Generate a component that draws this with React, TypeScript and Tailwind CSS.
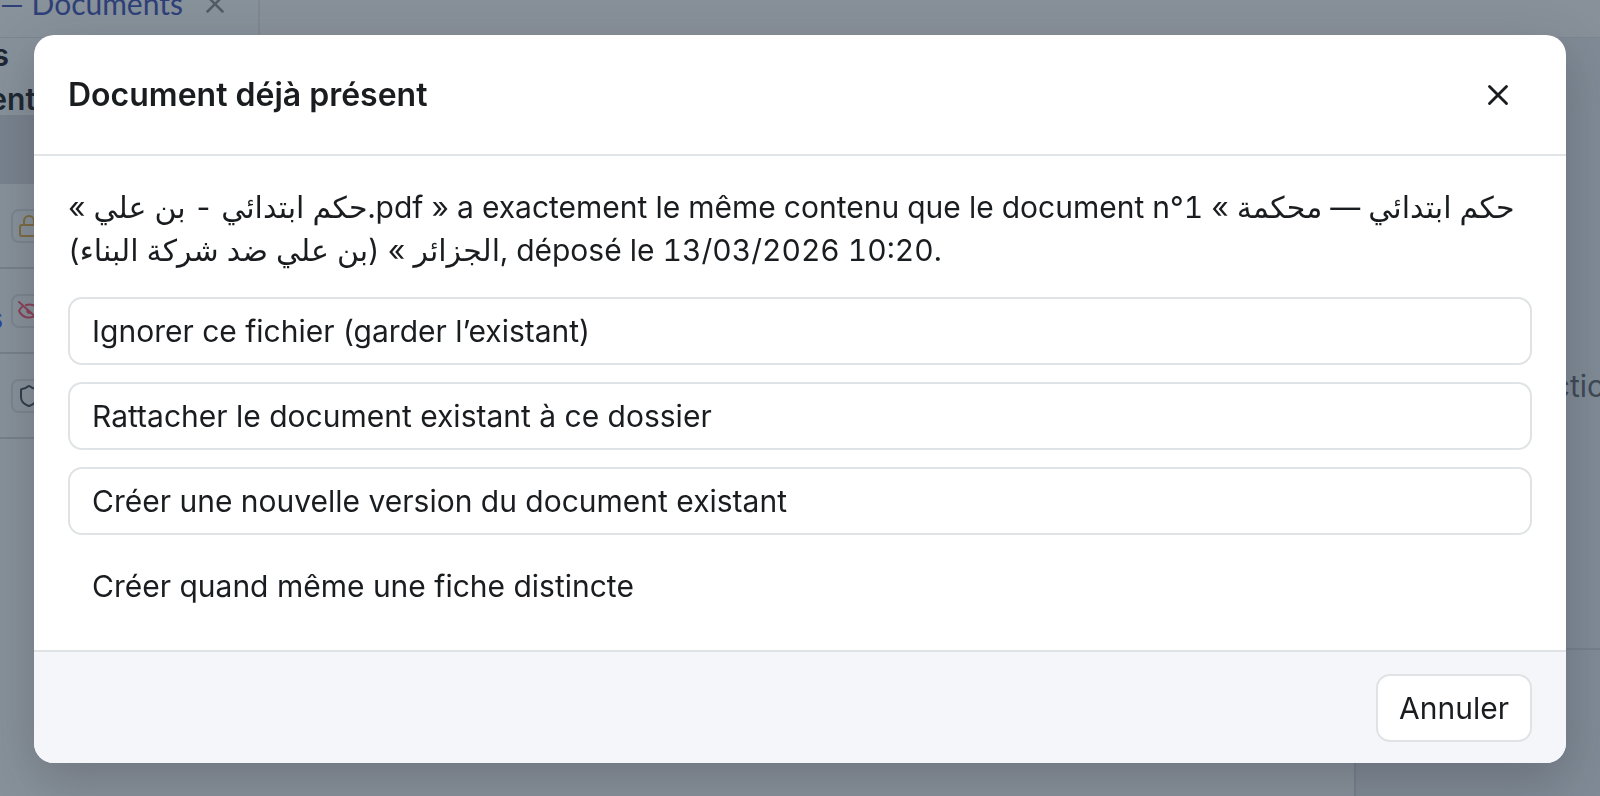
import React from 'react';
import { Lock, Shield, X } from 'lucide-react';

const choices = [
  { label: 'Ignorer ce fichier (garder l’existant)', outlined: true },
  { label: 'Rattacher le document existant à ce dossier', outlined: true },
  { label: 'Créer une nouvelle version du document existant', outlined: true },
  { label: 'Créer quand même une fiche distincte', outlined: false },
];

const EyeSlash: React.FC<{ className?: string }> = ({ className }) => (
  <svg
    viewBox="0 0 24 24"
    fill="none"
    stroke="currentColor"
    strokeWidth={2}
    strokeLinecap="round"
    strokeLinejoin="round"
    className={className}
  >
    <path d="M2 3l20 18" />
    <path d="M9 6c7-2 11 2 13 6-1 2-2 3-3.500 4.500" />
    <path d="M5 8c-1.500 1-2.300 2.500-3 4 3 6 9 8 15 5.500" />
    <path d="M10.500 11a2 2 0 0 0 3 2.500" />
  </svg>
);

const rows = [
  { icon: Lock, color: 'text-[#7d6b42]', label: 'Confidentiel' },
  { icon: EyeSlash, color: 'text-[#8b4057]', label: 'Masqué', link: 's' },
  { icon: Shield, color: 'text-[#2f3d4a]', label: 'Protégé' },
];

// Page behind the dialog, already dimmed
const Backdrop: React.FC = () => (
  <div className="flex h-screen flex-col overflow-hidden bg-[#7f8b96]" aria-hidden="true">
    <div className="flex h-[38px] shrink-0 border-b border-[#7c8791] bg-[#88919a]">
      <div className="flex w-[260px] items-end gap-[17px] border-r-2 border-[#7f8992] bg-[#87929b] pb-[18px] font-[Lato,sans-serif] text-[30px] leading-[32px] text-[#2f4079]">
        <span className="flex w-[183px] shrink-0 justify-end whitespace-nowrap">
          <span className="shrink-0">— Documents</span>
        </span>
        <X className="h-[30px] w-[30px] text-[#525c66]" strokeWidth={2} />
      </div>
    </div>
    <div className="flex min-h-0 flex-1">
      <main className="flex min-w-0 flex-1 flex-col border-r-2 border-[#76828d] bg-[#87929b]">
        <div className="flex h-[77px] w-[36px] shrink-0 flex-col items-end text-[30px] font-semibold text-[#1c2731]">
          <span className="flex w-full leading-[34px]">
            <span className="flex w-[9px] justify-end">s</span>
          </span>
          <span className="leading-[54px]">ent</span>
        </div>
        <div className="h-[69px] shrink-0 bg-[#78838e]" />
        {rows.map(({ icon: Icon, color, label, link }) => (
          <div key={label} className="flex h-[85px] shrink-0 items-center border-b-2 border-[#76818b]">
            <span className="flex w-[11px] pt-4 text-[30px] font-semibold text-[#2845a5]">
              <span className="flex w-[3px] justify-end">{link}</span>
            </span>
            <span className={`flex h-[34px] w-[40px] items-center rounded-lg border-2 border-[#7b868f] pl-1 ${color}`}>
              <Icon className="h-6 w-6 shrink-0" />
            </span>
          </div>
        ))}
      </main>
      <aside className="flex w-[244px] shrink-0 flex-col overflow-hidden">
        <div className="flex h-[612px] shrink-0 items-center border-b-2 border-[#75808b] pt-[86px] pl-[63px] text-[30px] whitespace-nowrap text-[#3d4956]">
          Aucune action
        </div>
      </aside>
    </div>
  </div>
);

const DuplicateDialog: React.FC = () => (
  <div className="fixed inset-0 flex items-center px-[34px] pt-[36px] pb-[34px]">
    <section
      role="dialog"
      aria-modal="true"
      aria-labelledby="dialog-title"
      className="w-full overflow-hidden rounded-[20px] bg-white shadow-[0_17px_51px_rgba(45,35,45,0.26)]"
    >
      <header className="flex h-[121px] items-center justify-between border-b-2 border-[#e2e5e7] px-[34px]">
        <h2 id="dialog-title" className="text-[32px] leading-[40px] font-semibold">
          Document déjà présent
        </h2>
        <button type="button" aria-label="Fermer" className="flex h-[68px] w-[68px] items-center justify-center">
          <X className="h-[34px] w-[34px]" strokeWidth={2} />
        </button>
      </header>

      <div className="px-[34px] py-[30px]">
        <p className="mb-[25px] text-[30px] leading-[43px] tabular-nums">
          « حكم ابتدائي - بن علي.pdf » a exactement le même contenu que le document n°1 « حكم ابتدائي — محكمة الجزائر »
          (بن علي ضد شركة البناء), déposé le 13/03/2026 10:20.
        </p>
        <div className="flex flex-col gap-[17px]">
          {choices.map(({ label, outlined }) => (
            <button
              key={label}
              type="button"
              className={`h-[68px] w-full rounded-[14px] border-2 px-[22px] text-left text-[30px] leading-[40px] ${
                outlined ? 'border-[#e0e3e5]' : 'border-transparent'
              }`}
            >
              {label}
            </button>
          ))}
        </div>
      </div>

      <footer className="flex justify-end border-t-2 border-[#e0e3e5] bg-[#f4f6fa] px-[34px] pt-[22px] pb-[21px]">
        <button
          type="button"
          className="h-[68px] rounded-[14px] border-2 border-[#e0e3e5] bg-white px-[21px] text-[30px] leading-[40px]"
        >
          Annuler
        </button>
      </footer>
    </section>
  </div>
);

const App: React.FC = () => (
  <div className="font-[Inter,'DejaVu_Sans',sans-serif] text-[#1a1d20]">
    <Backdrop />
    <DuplicateDialog />
  </div>
);

export default App;
